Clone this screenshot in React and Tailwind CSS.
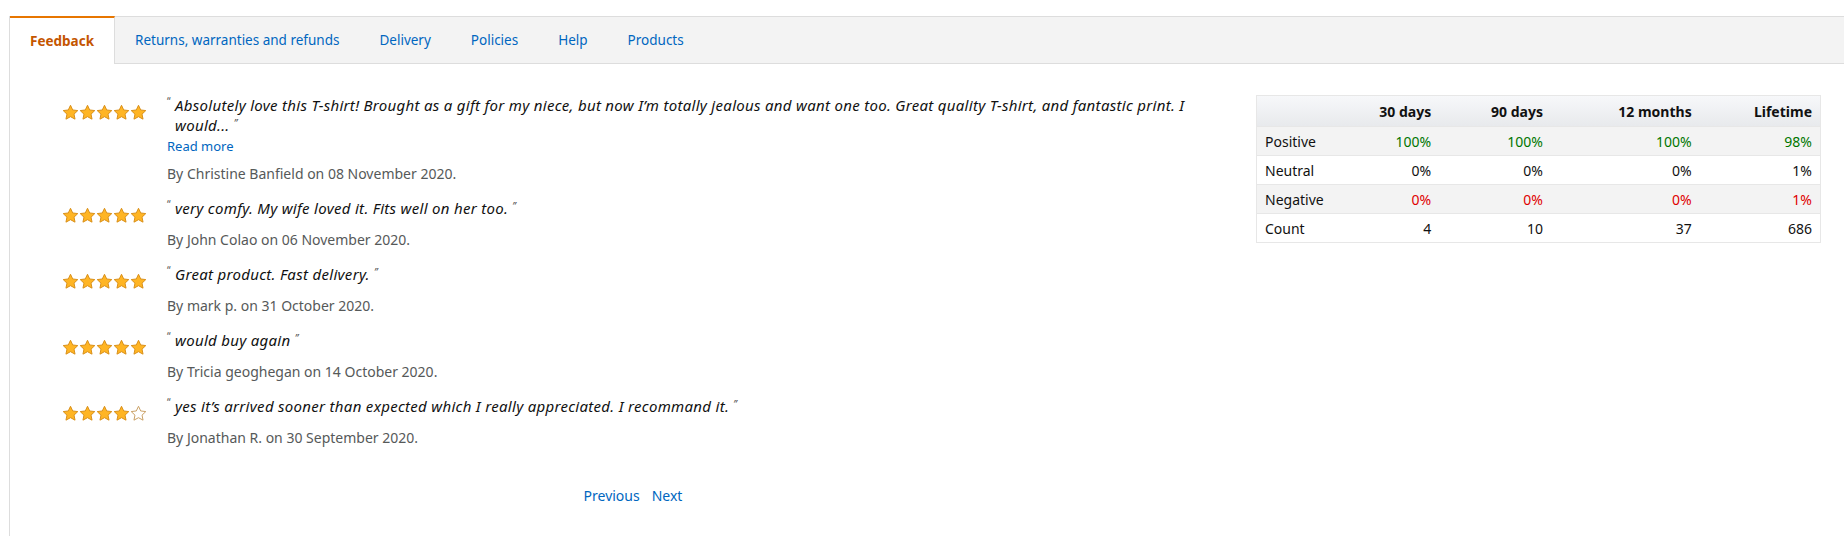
const tabs = ['Returns, warranties and refunds', 'Delivery', 'Policies', 'Help', 'Products']

const reviews = [
  {
    stars: 5,
    text: 'Absolutely love this T-shirt! Brought as a gift for my niece, but now I’m totally jealous and want one too. Great quality T-shirt, and fantastic print. I would...',
    more: true,
    by: 'By Christine Banfield on 08 November 2020.',
  },
  { stars: 5, text: 'very comfy. My wife loved it. Fits well on her too.', by: 'By John Colao on 06 November 2020.' },
  { stars: 5, text: 'Great product. Fast delivery.', by: 'By mark p. on 31 October 2020.' },
  { stars: 5, text: 'would buy again', by: 'By Tricia geoghegan on 14 October 2020.' },
  {
    stars: 4,
    text: 'yes it’s arrived sooner than expected which I really appreciated. I recommand it.',
    by: 'By Jonathan R. on 30 September 2020.',
  },
]

const rows = [
  { label: 'Positive', values: ['100%', '100%', '100%', '98%'], color: 'text-[#007600]', shade: true },
  { label: 'Neutral', values: ['0%', '0%', '0%', '1%'], color: 'text-[#111]' },
  { label: 'Negative', values: ['0%', '0%', '0%', '1%'], color: 'text-[#e00000]', shade: true },
  { label: 'Count', values: ['4', '10', '37', '686'], color: 'text-[#111]' },
]

function Star({ filled }) {
  return (
    <svg width="17" height="17" viewBox="0 0 24 24">
      <path
        d="M12 1.8l3.1 6.6 7.2.9-5.3 5 1.4 7.1L12 17.9l-6.4 3.5L7 14.3l-5.3-5 7.2-.9z"
        fill={filled ? '#ffb524' : '#fff'}
        stroke={filled ? '#d9901a' : '#c9a064'}
        strokeWidth="1.4"
        strokeLinejoin="round"
      />
    </svg>
  )
}

function Stars({ count }) {
  return (
    <div className="mt-[9px] flex w-[85px] shrink-0">
      {[0, 1, 2, 3, 4].map((i) => (
        <Star key={i} filled={i < count} />
      ))}
    </div>
  )
}

function Review({ review }) {
  return (
    <div className="flex gap-5">
      <Stars count={review.stars} />
      <div>
        <div className="flex text-[15px] leading-5 tracking-[0.3px] italic text-[#111]">
          <span className="w-2 shrink-0 self-start text-[10px] leading-3 not-italic text-[#555]">“</span>
          <p>
            {review.text} <span className="relative -top-1 text-[10px] text-[#555]">”</span>
          </p>
        </div>
        {review.more && (
          <a href="#" className="block text-[13px] leading-[18px] text-[#0066c0]">
            Read more
          </a>
        )}
        <p className={`${review.more ? 'mt-[9px]' : 'mt-[10px]'} text-[14px] leading-5 text-[#565959]`}>
          {review.by}
        </p>
      </div>
    </div>
  )
}

export default function App() {
  return (
    <div className="min-h-screen bg-white pl-[9px] pt-4" style={{ fontFamily: '"Noto Sans", Arial, sans-serif' }}>
      <div className="min-h-[520px] border-l border-[#ddd]">
        <div className="flex h-[48px] border-y border-[#ddd] bg-[#f3f3f3] text-[13.5px]">
          <div className="-mb-px -mt-px flex items-center border-r border-t-2 border-r-[#ddd] border-t-[#e77600] bg-white px-5 font-bold text-[#c45500]">
            Feedback
          </div>
          {tabs.map((tab) => (
            <a key={tab} href="#" className="flex items-center px-5 text-[#0066c0]">
              {tab}
            </a>
          ))}
        </div>

        <div className="flex pt-[31px] pr-[23px]">
          <div className="flex-1">
            <div className="flex flex-col gap-[14px] pl-[52px] pr-[40px]">
              {reviews.map((review, i) => (
                <Review key={i} review={review} />
              ))}
            </div>
            <div className="mt-[38px] flex justify-center gap-3 text-[14px] leading-5 text-[#0066c0]">
              <a href="#">Previous</a>
              <a href="#">Next</a>
            </div>
          </div>

          <table className="h-fit w-[565px] border-collapse border border-[#e7e7e7] text-[14px] text-[#111]">
            <thead>
              <tr className="h-[31px] bg-gradient-to-b from-[#f7f8fa] to-[#e7e9ec] font-bold">
                <th className="w-[100px]"></th>
                <th className="w-[83px] px-2 text-right">30 days</th>
                <th className="w-[112px] px-2 text-right">90 days</th>
                <th className="w-[149px] px-2 text-right">12 months</th>
                <th className="w-[121px] px-2 text-right">Lifetime</th>
              </tr>
            </thead>
            <tbody>
              {rows.map((row) => (
                <tr key={row.label} className={`h-[29px] border-t border-[#e7e7e7] ${row.shade ? 'bg-[#f3f3f3]' : 'bg-white'}`}>
                  <td className="px-2">{row.label}</td>
                  {row.values.map((v, i) => (
                    <td key={i} className={`px-2 text-right ${row.color}`}>
                      {v}
                    </td>
                  ))}
                </tr>
              ))}
            </tbody>
          </table>
        </div>
      </div>
    </div>
  )
}
